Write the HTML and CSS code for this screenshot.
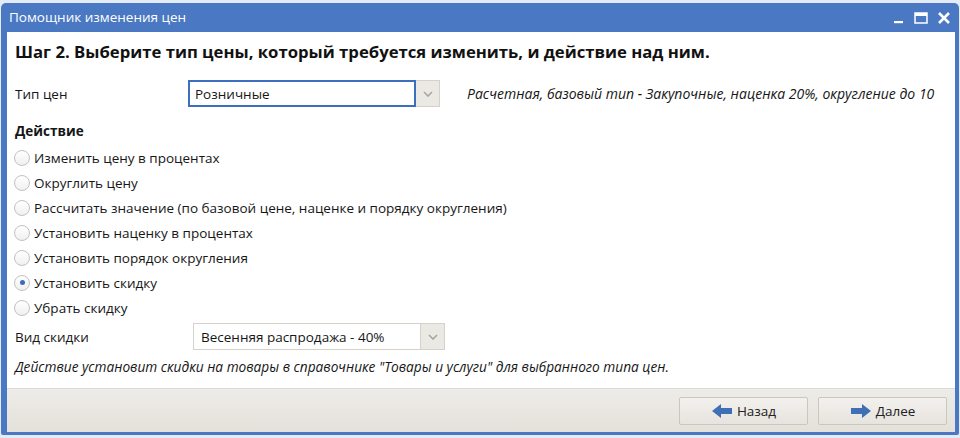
FILE: index.html
```html
<!DOCTYPE html>
<html lang="ru">
<head>
<meta charset="utf-8">
<title>Помощник изменения цен</title>
<link rel="stylesheet" href="styles.css">
</head>
<body>
<div class="window">
  <div class="titlebar">
    <span class="title">Помощник изменения цен</span>
    <div class="controls">
      <svg class="ctl" width="12" height="12" viewBox="0 0 12 12"><rect x="1" y="9" width="9" height="2.2" fill="#fff"/></svg>
      <svg class="ctl" width="14" height="12" viewBox="0 0 14 12"><rect x="1" y="1" width="12" height="10" fill="none" stroke="#fff" stroke-width="1.5"/><rect x="1" y="1" width="12" height="3" fill="#fff"/></svg>
      <svg class="ctl" width="14" height="12" viewBox="0 0 14 12"><path d="M2 1 L12 11 M12 1 L2 11" stroke="#fff" stroke-width="2.6"/></svg>
    </div>
  </div>
  <div class="content">
    <h1 class="heading">Шаг 2. Выберите тип цены, который требуется изменить, и действие над ним.</h1>
    <div class="row row-type">
      <span class="label label-type">Тип цен</span>
      <div class="combo combo-focus">
        <span class="combo-value">Розничные</span>
        <span class="combo-btn"><svg width="10" height="6" viewBox="0 0 10 6"><path d="M1 1 L5 5 L9 1" fill="none" stroke="#a9a69f" stroke-width="1.6"/></svg></span>
      </div>
      <span class="hint">Расчетная, базовый тип - Закупочные, наценка 20%, округление до 10</span>
    </div>
    <div class="section">Действие</div>
    <ul class="radios">
      <li class="radio-row"><span class="radio"></span>Изменить цену в процентах</li>
      <li class="radio-row"><span class="radio"></span>Округлить цену</li>
      <li class="radio-row"><span class="radio"></span>Рассчитать значение (по базовой цене, наценке и порядку округления)</li>
      <li class="radio-row"><span class="radio"></span>Установить наценку в процентах</li>
      <li class="radio-row"><span class="radio"></span>Установить порядок округления</li>
      <li class="radio-row"><span class="radio checked"></span>Установить скидку</li>
      <li class="radio-row"><span class="radio"></span>Убрать скидку</li>
    </ul>
    <div class="row row-discount">
      <span class="label label-discount">Вид скидки</span>
      <div class="combo combo-plain">
        <span class="combo-value">Весенняя распродажа - 40%</span>
        <span class="combo-btn"><svg width="10" height="6" viewBox="0 0 10 6"><path d="M1 1 L5 5 L9 1" fill="none" stroke="#a9a69f" stroke-width="1.6"/></svg></span>
      </div>
    </div>
    <p class="note">Действие установит скидки на товары в справочнике "Товары и услуги" для выбранного типа цен.</p>
  </div>
  <div class="footer">
    <button class="btn"><svg width="22" height="16" viewBox="0 0 22 16"><path d="M1 8 L10 1 L10 5 L21 5 L21 11 L10 11 L10 15 Z" fill="#3f70b5"/></svg>Назад</button>
    <button class="btn"><svg width="22" height="16" viewBox="0 0 22 16"><path d="M21 8 L12 1 L12 5 L1 5 L1 11 L12 11 L12 15 Z" fill="#3f70b5"/></svg>Далее</button>
  </div>
</div>
</body>
</html>
```
FILE: styles.css
```css
* { box-sizing: border-box; }
html, body { margin: 0; padding: 0; }
body {
  background: #e3ebf6;
  font-family: "Open Sans", "Noto Sans", "DejaVu Sans", sans-serif;
  font-size: 13.5px;
  color: #161616;
  width: 960px;
  height: 438px;
  overflow: hidden;
}
.window {
  margin: 3px 1px 0 1px;
  height: 432px;
  background: #4a78c2;
  border-radius: 5px 5px 2px 2px;
  padding: 0 4px 3px 6px;
  display: flex;
  flex-direction: column;
}
.titlebar {
  height: 29px;
  display: flex;
  align-items: center;
  justify-content: space-between;
  margin-left: -4px;
  padding-left: 6px;
}
.title {
  color: #fff;
  font-size: 13.5px;
  padding-bottom: 1px;
}
.controls {
  display: flex;
  align-items: center;
  gap: 9px;
  padding-right: 4px;
}
.ctl { display: block; }
.content {
  flex: 1;
  background: #fff;
  padding: 8px 8px 0 8px;
  display: flex;
  flex-direction: column;
}
.heading {
  margin: 0;
  font-size: 16.7px;
  font-weight: 700;
  line-height: 24px;
  height: 24px;
  color: #111;
}
.row {
  display: flex;
  align-items: center;
  height: 27px;
}
.row-type { margin-top: 16px; }
.label-type { width: 173px; }
.label-discount { width: 178px; }
.combo {
  display: flex;
  height: 27px;
}
.combo-value {
  display: flex;
  align-items: center;
  padding-left: 7px;
  background: #fff;
}
.combo-focus .combo-value {
  width: 228px;
  border: 2px solid #3d6fc1;
  padding-left: 5px;
}
.combo-plain .combo-value {
  width: 227px;
  border: 1px solid #d6d2ca;
  border-right: 0;
}
.combo-btn {
  width: 25px;
  display: flex;
  align-items: center;
  justify-content: center;
  background: #ebe9e4;
  border: 1px solid #d6d2ca;
}
.combo-focus .combo-btn { width: 24px; border-left: 0; }
.hint {
  margin-left: 27px;
  font-size: 14px;
  font-style: italic;
}
.section {
  margin-top: 15px;
  font-weight: 700;
  line-height: 18px;
  height: 18px;
}
.radios {
  list-style: none;
  margin: 5px 0 0 0;
  padding: 0;
}
.radio-row {
  height: 25px;
  display: flex;
  align-items: center;
}
.radio {
  width: 16px;
  height: 16px;
  border-radius: 50%;
  border: 1px solid #c2c2c2;
  background: linear-gradient(#ffffff, #f0f0f0);
  margin-right: 4px;
  margin-left: -1px;
  position: relative;
  flex: none;
}
.radio.checked::after {
  content: "";
  position: absolute;
  left: 4.5px;
  top: 4.5px;
  width: 5px;
  height: 5px;
  border-radius: 50%;
  background: #3c6cc0;
}
.row-discount { margin-top: 3px; }
.note {
  margin: 8px 0 0 0;
  line-height: 18px;
  font-size: 13.7px;
  font-style: italic;
}
.footer {
  height: 44px;
  background: linear-gradient(#eeece8, #e4e1db);
  border-top: 1px solid #dedbd5;
  display: flex;
  justify-content: flex-end;
  align-items: flex-start;
  gap: 10px;
  padding: 8px 8px 0 0;
}
.btn {
  width: 129px;
  height: 28px;
  display: flex;
  align-items: center;
  justify-content: center;
  gap: 4px;
  font-family: inherit;
  font-size: 13.5px;
  color: #222;
  background: linear-gradient(#f3f1ee, #e7e4df);
  border: 1px solid #cbc7bf;
  border-radius: 2px;
  padding: 0;
}
.btn svg { display: block; }
```
